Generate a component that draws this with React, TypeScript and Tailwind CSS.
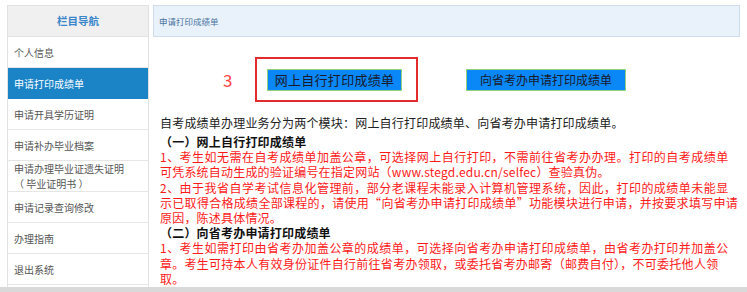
import React from "react";

const navItems = [
  { label: "个人信息" },
  { label: "申请打印成绩单", active: true },
  { label: "申请开具学历证明" },
  { label: "申请补办毕业档案" },
  { label: "申请办理毕业证遗失证明", sub: "（ 毕业证明书 ）" },
  { label: "申请记录查询修改" },
  { label: "办理指南" },
  { label: "退出系统" },
];

const App = () => {
  return (
    <div className="w-[747px] h-[292px] overflow-hidden bg-white font-['Noto_Sans_CJK_SC',sans-serif]">
      <div className="flex pt-[5px] pl-[7px] h-[287px]">
        {/* Sidebar */}
        <div className="w-[142px] shrink-0 border-l border-r border-t border-[#e2e2e2] flex flex-col">
          <div className="h-[31px] bg-[#f0f0f0] border-b border-[#e2e2e2] flex items-center justify-center text-[10.5px] font-bold text-[#3a86cc]">
            栏目导航
          </div>
          {navItems.map((item) => (
            <div
              key={item.label}
              className={
                item.active
                  ? "h-[31px] bg-[#1b84c7] text-white flex flex-col justify-center pl-[6px] text-[10px] border-b border-[#1b84c7]"
                  : "h-[31px] bg-white text-[#555] flex flex-col justify-center pl-[6px] text-[10px] border-b border-[#e6e6e6]"
              }
            >
              <div className="leading-[15px] whitespace-nowrap">{item.label}</div>
              {item.sub && <div className="leading-[15px] whitespace-nowrap">{item.sub}</div>}
            </div>
          ))}
        </div>

        {/* Main */}
        <div className="ml-[4px] w-[587px] flex flex-col">
          <div className="h-[32px] bg-[#e9f1fa] border border-[#cfdcec] flex items-center pl-[5px] text-[8.5px] text-[#4a74a0]">
            申请打印成绩单
          </div>

          <div className="flex items-center pt-[20px] pl-[70px]">
            <span className="text-[17px] leading-none text-[#ff4545] w-[32px]">3</span>
            <div className="border-2 border-[#e32b2b] pl-[10px] pr-[14px] pt-[10px] pb-[9px]">
              <div className="w-[135px] h-[22px] bg-[#0a88f7] border border-[#95d07a] flex items-center justify-center text-[13px] tracking-[0.3px] text-[#1a1a2a]">
                网上自行打印成绩单
              </div>
            </div>
            <div className="ml-[48px] w-[160px] h-[22px] bg-[#0a88f7] border border-[#95d07a] flex items-center justify-center text-[12px] text-[#1a1a2a]">
              向省考办申请打印成绩单
            </div>
          </div>

          <div className="pl-[7px] pt-[13px] text-[12px] tracking-[0.2px] whitespace-nowrap">
            <div className="leading-[15px] text-[#222]">
              自考成绩单办理业务分为两个模块：网上自行打印成绩单、向省考办申请打印成绩单。
            </div>
            <div className="mt-[4px] leading-[15.2px]">
              <div className="font-bold text-[#111]">（一）网上自行打印成绩单</div>
              <div className="text-[#ff1a1a] tracking-[0.48px]">
                　1、考生如无需在自考成绩单加盖公章，可选择网上自行打印，不需前往省考办办理。打印的自考成绩单
              </div>
              <div className="text-[#ff1a1a]">
                可凭系统自动生成的验证编号在指定网站（www.stegd.edu.cn/selfec）查验真伪。
              </div>
              <div className="text-[#ff1a1a] tracking-[0.48px]">
                　2、由于我省自学考试信息化管理前，部分老课程未能录入计算机管理系统，因此，打印的成绩单未能显
              </div>
              <div className="text-[#ff1a1a] tracking-[0.3px]">
                示已取得合格成绩全部课程的，请使用“向省考办申请打印成绩单”功能模块进行申请，并按要求填写申请
              </div>
              <div className="text-[#ff1a1a]">原因，陈述具体情况。</div>
              <div className="font-bold text-[#111]">（二）向省考办申请打印成绩单</div>
              <div className="text-[#ff1a1a] tracking-[0.48px]">
                　1、考生如需打印由省考办加盖公章的成绩单，可选择向省考办申请打印成绩单，由省考办打印并加盖公
              </div>
              <div className="text-[#ff1a1a] tracking-[0.27px]">
                章。考生可持本人有效身份证件自行前往省考办领取，或委托省考办邮寄（邮费自付），不可委托他人领
              </div>
              <div className="text-[#ff1a1a]">取。</div>
            </div>
          </div>
        </div>
      </div>
      <div className="h-[5px] bg-[#d9d9d9]" />
    </div>
  );
};

export default App;
